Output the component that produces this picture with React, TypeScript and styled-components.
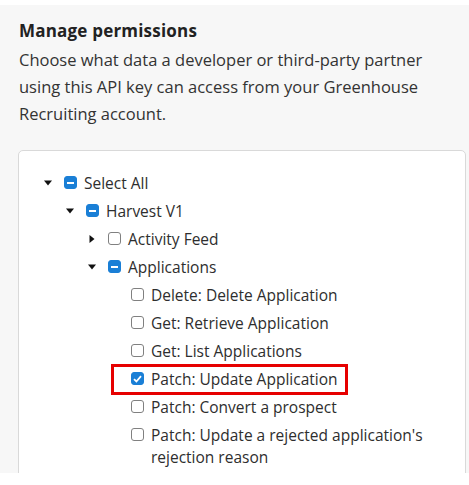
import styled, { createGlobalStyle } from 'styled-components';

interface TreeNode {
  label: string;
  state: 'on' | 'off' | 'mixed';
  open?: boolean;
  leaf?: boolean;
  highlight?: boolean;
  children?: TreeNode[];
}

const tree: TreeNode = {
  label: 'Select All',
  state: 'mixed',
  open: true,
  children: [
    {
      label: 'Harvest V1',
      state: 'mixed',
      open: true,
      children: [
        { label: 'Activity Feed', state: 'off', open: false },
        {
          label: 'Applications',
          state: 'mixed',
          open: true,
          children: [
            { label: 'Delete: Delete Application', state: 'off', leaf: true },
            { label: 'Get: Retrieve Application', state: 'off', leaf: true },
            { label: 'Get: List Applications', state: 'off', leaf: true },
            { label: 'Patch: Update Application', state: 'on', leaf: true, highlight: true },
            { label: 'Patch: Convert a prospect', state: 'off', leaf: true },
            {
              label: "Patch: Update a rejected application's rejection reason",
              state: 'off',
              leaf: true,
            },
          ],
        },
      ],
    },
  ],
};

const GlobalStyle = createGlobalStyle`
  html, body {
    margin: 0;
    padding: 0;
    background: #ffffff;
  }
  body {
    font-family: 'Open Sans', 'Liberation Sans', sans-serif;
    color: #2b2b2b;
  }
`;

const Page = styled.div`
  margin-top: 5px;
  height: 468px;
  width: 469px;
  background: #f7f7f7;
  overflow: hidden;
  box-sizing: border-box;
  padding: 15px 3px 0 18px;
`;

const Title = styled.h2`
  margin: 0 0 0 1px;
  font-size: 17px;
  font-weight: 700;
  line-height: 22px;
  letter-spacing: 0.2px;
  color: #222;
`;

const Intro = styled.p`
  margin: 4px 0 0 1px;
  font-size: 16.5px;
  line-height: 27px;
  color: #333;
  width: 440px;
`;

const Panel = styled.div`
  margin-top: 23px;
  background: #fff;
  border: 1px solid #d9d9d9;
  border-radius: 5px;
  height: 400px;
  padding: 21px 0 0 25px;
  box-sizing: border-box;
`;

const List = styled.ul`
  list-style: none;
  margin: 0;
  padding: 0;
`;

const Item = styled.li<{ $indent: number }>`
  padding-left: ${(p) => p.$indent}px;
`;

const Row = styled.div`
  display: flex;
  align-items: flex-start;
  min-height: 28px;
  position: relative;
  font-size: 15.5px;
  line-height: 22px;
  color: #2e2e2e;
`;

const Mark = styled.span`
  position: absolute;
  left: -20px;
  top: -4px;
  width: 237px;
  height: 31px;
  border: 3px solid #e60000;
  box-sizing: border-box;
  pointer-events: none;
`;

const Toggle = styled.span<{ $leaf?: boolean }>`
  width: ${(p) => (p.$leaf ? 0 : 20)}px;
  height: 22px;
  display: flex;
  align-items: center;
  justify-content: flex-start;
  flex: none;
`;

const Box = styled.span<{ $state: 'on' | 'off' | 'mixed' }>`
  width: 13px;
  height: 13px;
  margin: 4px 7px 0 0;
  box-sizing: border-box;
  border-radius: 3px;
  flex: none;
  display: flex;
  align-items: center;
  justify-content: center;
  background: ${(p) => (p.$state === 'off' ? '#fff' : '#1a7fd6')};
  border: 1px solid ${(p) => (p.$state === 'off' ? '#808080' : '#1a7fd6')};
`;

const Dash = styled.span`
  width: 7px;
  height: 2px;
  background: #fff;
`;

const Label = styled.span`
  max-width: 300px;
`;

function Caret({ open }: { open: boolean }) {
  return (
    <svg width="8" height="8" viewBox="0 0 8 8">
      {open ? <path d="M0 1.5 L8 1.5 L4 6.5 Z" fill="#111" /> : <path d="M1.5 0 L6.5 4 L1.5 8 Z" fill="#111" />}
    </svg>
  );
}

function Check({ state }: { state: TreeNode['state'] }) {
  return (
    <Box $state={state}>
      {state === 'mixed' && <Dash />}
      {state === 'on' && (
        <svg width="9" height="8" viewBox="0 0 9 8">
          <path d="M1 4.2 L3.4 6.5 L8 1.2" stroke="#fff" strokeWidth="1.8" fill="none" />
        </svg>
      )}
    </Box>
  );
}

function Node({ node, indent }: { node: TreeNode; indent: number }) {
  return (
    <Item $indent={indent}>
      <Row>
        {node.highlight && <Mark />}
        <Toggle $leaf={node.leaf}>{!node.leaf && <Caret open={!!node.open} />}</Toggle>
        <Check state={node.state} />
        <Label>{node.label}</Label>
      </Row>
      {node.open && node.children && (
        <List>
          {node.children.map((c) => (
            <Node key={c.label} node={c} indent={c.leaf ? 43 : 22} />
          ))}
        </List>
      )}
    </Item>
  );
}

export default function App() {
  return (
    <>
      <GlobalStyle />
      <Page>
        <Title>Manage permissions</Title>
        <Intro>
          Choose what data a developer or third-party partner using this API key can access from your Greenhouse
          Recruiting account.
        </Intro>
        <Panel>
          <List>
            <Node node={tree} indent={0} />
          </List>
        </Panel>
      </Page>
    </>
  );
}
